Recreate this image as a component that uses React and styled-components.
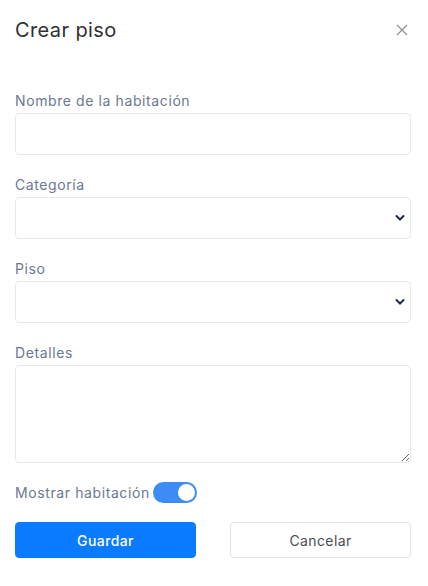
import React, { useState } from "react";
import styled, { createGlobalStyle } from "styled-components";

const GlobalStyle = createGlobalStyle`
  html, body {
    margin: 0;
    padding: 0;
    background: #ffffff;
    font-family: "Inter", "Noto Sans", sans-serif;
  }
  * {
    box-sizing: border-box;
  }
`;

const Modal = styled.div`
  width: 428px;
  padding: 15px 17px 0 15px;
`;

const Header = styled.div`
  display: flex;
  align-items: center;
  justify-content: space-between;
  height: 30px;
  margin-bottom: 46px;
`;

const Title = styled.h2`
  margin: 0;
  font-size: 20px;
  font-weight: 400;
  color: #2f3033;
  letter-spacing: 0.4px;
`;

const CloseButton = styled.button`
  border: none;
  background: none;
  padding: 0;
  margin-right: 2px;
  width: 14px;
  height: 14px;
  display: flex;
  align-items: center;
  justify-content: center;
  cursor: pointer;
  color: #8a8d93;
`;

const Field = styled.div`
  display: flex;
  flex-direction: column;
  margin-bottom: 20px;
`;

const Label = styled.label`
  font-size: 14px;
  line-height: 20px;
  color: #6b7794;
  letter-spacing: 0.6px;
  margin-bottom: 2px;
`;

const Input = styled.input`
  width: 100%;
  height: 42px;
  border: 1px solid #e6e9ef;
  border-radius: 4px;
  padding: 0 12px;
  font-size: 14px;
  font-family: inherit;
  outline: none;
`;

const SelectWrap = styled.div`
  position: relative;
`;

const Select = styled.select`
  width: 100%;
  height: 42px;
  border: 1px solid #e6e9ef;
  border-radius: 4px;
  padding: 0 12px;
  font-size: 14px;
  font-family: inherit;
  background: #fff;
  appearance: none;
  outline: none;
`;

const Chevron = styled.svg`
  position: absolute;
  right: 6px;
  top: 17px;
  pointer-events: none;
`;

const TextArea = styled.textarea`
  width: 100%;
  height: 98px;
  border: 1px solid #e6e9ef;
  border-radius: 4px;
  padding: 8px 12px;
  font-size: 14px;
  font-family: inherit;
  resize: vertical;
  outline: none;
  display: block;
`;

const ToggleRow = styled.div`
  display: flex;
  align-items: center;
  gap: 3px;
  margin-top: -1px;
  margin-bottom: 19px;
`;

const ToggleLabel = styled.span`
  font-size: 14px;
  line-height: 20px;
  color: #6b7794;
  letter-spacing: 0.6px;
`;

const Switch = styled.button`
  position: relative;
  width: 44px;
  height: 21px;
  border-radius: 11px;
  border: none;
  padding: 0;
  background: ${(p) => (p.$on ? "#3d8cf6" : "#d5d9e0")};
  cursor: pointer;
`;

const Knob = styled.span`
  position: absolute;
  top: 2px;
  left: ${(p) => (p.$on ? "25px" : "2px")};
  width: 17px;
  height: 17px;
  border-radius: 50%;
  background: #fff;
`;

const Actions = styled.div`
  display: flex;
  justify-content: space-between;
`;

const Button = styled.button`
  width: 181px;
  height: 36px;
  border-radius: 4px;
  font-size: 14px;
  font-family: inherit;
  letter-spacing: 0.4px;
  cursor: pointer;
  border: 1px solid ${(p) => (p.$primary ? "#0a7bff" : "#dfe2e7")};
  background: ${(p) => (p.$primary ? "#0a7bff" : "#ffffff")};
  color: ${(p) => (p.$primary ? "#ffffff" : "#4a4d52")};
  font-weight: ${(p) => (p.$primary ? 500 : 400)};
`;

const ChevronIcon = () => (
  <Chevron width="10" height="8" viewBox="0 0 10 8">
    <path d="M1.5 2 L5 5.5 L8.5 2" fill="none" stroke="#1f2a44" strokeWidth="2" strokeLinecap="round" />
  </Chevron>
);

export default function App() {
  const [show, setShow] = useState(true);
  return (
    <>
      <GlobalStyle />
      <Modal>
        <Header>
          <Title>Crear piso</Title>
          <CloseButton aria-label="Cerrar">
            <svg width="12" height="12" viewBox="0 0 12 12">
              <path d="M1 1 L11 11 M11 1 L1 11" stroke="#8a8d93" strokeWidth="1.1" />
            </svg>
          </CloseButton>
        </Header>

        <Field>
          <Label>Nombre de la habitación</Label>
          <Input type="text" />
        </Field>

        <Field>
          <Label>Categoría</Label>
          <SelectWrap>
            <Select>
              <option></option>
            </Select>
            <ChevronIcon />
          </SelectWrap>
        </Field>

        <Field>
          <Label>Piso</Label>
          <SelectWrap>
            <Select>
              <option></option>
            </Select>
            <ChevronIcon />
          </SelectWrap>
        </Field>

        <Field>
          <Label>Detalles</Label>
          <TextArea />
        </Field>

        <ToggleRow>
          <ToggleLabel>Mostrar habitación</ToggleLabel>
          <Switch $on={show} onClick={() => setShow(!show)}>
            <Knob $on={show} />
          </Switch>
        </ToggleRow>

        <Actions>
          <Button $primary>Guardar</Button>
          <Button>Cancelar</Button>
        </Actions>
      </Modal>
    </>
  );
}
